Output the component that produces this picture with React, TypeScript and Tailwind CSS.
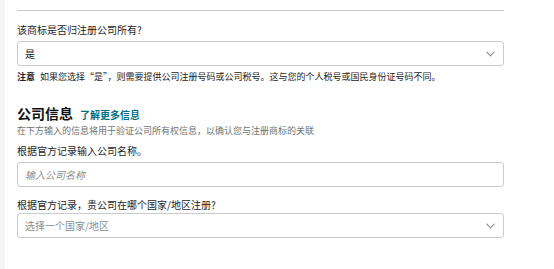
import React from "react";

const Chevron: React.FC = () => (
  <svg
    xmlns="http://www.w3.org/2000/svg"
    viewBox="0 0 10 6"
    className="w-[9px] h-[6px]"
    fill="none"
    stroke="#8d9096"
    strokeWidth="1.3"
    strokeLinecap="round"
    strokeLinejoin="round"
  >
    <path d="M1 1l4 4 4-4" />
  </svg>
);

const SelectBox: React.FC<{ value: string; muted?: boolean }> = ({ value, muted }) => (
  <div className="h-[25px] w-full rounded-[3px] border border-[#c8cccc] bg-white flex items-center justify-between pl-[7px] pr-[8px]">
    <span className={muted ? "text-[10px] text-[#8a8e8e]" : "text-[10px] text-[#0f1111]"}>{value}</span>
    <Chevron />
  </div>
);

const App: React.FC = () => {
  return (
    <div
      className="flex w-[554px] h-[269px] bg-white overflow-hidden"
      style={{ fontFamily: '"Noto Sans CJK SC", "Noto Sans", sans-serif' }}
    >
      <div className="w-[5px] h-full bg-[#f6f6f6]" />
      <div className="ml-[12px] w-[487px] flex flex-col">
        <div className="mt-[10px] h-px bg-[#c4c8c8]" />

        <p className="mt-[12px] text-[10px] leading-[14px] text-[#1f2323]">该商标是否归注册公司所有?</p>
        <div className="mt-[4px]">
          <SelectBox value="是" />
        </div>
        <p className="mt-[4px] text-[9px] leading-[14px] text-[#1f2323]">
          <span className="font-bold">注意</span>
          <span className="ml-[5px]">如果您选择“是”，则需要提供公司注册号码或公司税号。这与您的个人税号或国民身份证号码不同。</span>
        </p>

        <div className="mt-[19px] flex items-baseline gap-[7px] h-[20px]">
          <h2 className="text-[14px] leading-[20px] font-bold text-[#0f1111]">公司信息</h2>
          <a className="text-[10px] font-bold text-[#007185]">了解更多信息</a>
        </div>
        <p className="mt-[1px] text-[9px] leading-[13px] text-[#6f7373]">
          在下方输入的信息将用于验证公司所有权信息，以确认您与注册商标的关联
        </p>

        <p className="mt-[7px] text-[10px] leading-[14px] text-[#1f2323]">根据官方记录输入公司名称。</p>
        <div className="mt-[4px] h-[25px] w-full rounded-[3px] border border-[#c8cccc] bg-white flex items-center pl-[7px]">
          <span className="text-[10px] italic text-[#8a8e8e]">输入公司名称</span>
        </div>

        <p className="mt-[11px] text-[10px] leading-[14px] text-[#1f2323]">根据官方记录，贵公司在哪个国家/地区注册?</p>
        <div className="mt-[1px]">
          <SelectBox value="选择一个国家/地区" muted />
        </div>
      </div>
    </div>
  );
};

export default App;
